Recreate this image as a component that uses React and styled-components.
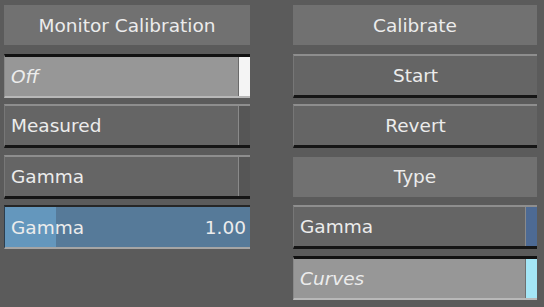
import styled, { createGlobalStyle, css } from 'styled-components';

const GlobalStyle = createGlobalStyle`
  html, body {
    margin: 0;
    padding: 0;
    background: #5b5b5b;
  }
`;

const Panel = styled.div`
  display: grid;
  grid-template-columns: 246px 244px;
  column-gap: 43px;
  padding: 3px 7px 0 4px;
  width: 544px;
  height: 307px;
  box-sizing: border-box;
  font-family: "DejaVu Sans", sans-serif;
  font-size: 18.5px;
  color: #ececec;
`;

const Column = styled.div`
  display: grid;
  grid-auto-rows: 44px;
  row-gap: 6.5px;
`;

const Title = styled.div`
  align-self: start;
  margin-top: 2px;
  height: 40px;
  display: flex;
  align-items: center;
  justify-content: center;
  background: #717171;
`;

const raised = css`
  background: #656565;
  border-top: 2px solid #8e8e8e;
  border-bottom: 3px solid #151515;
  border-left: 1px solid #777;
`;

const pressed = css`
  background: #979797;
  border-top: 3px solid #121212;
  border-bottom: 2px solid #b8b8b8;
  border-left: 1px solid #888;
`;

const Row = styled.div`
  box-sizing: border-box;
  display: flex;
  align-items: stretch;
  ${p => (p.$on ? pressed : raised)}
`;

const Label = styled.div`
  flex: 1;
  display: flex;
  align-items: center;
  justify-content: ${p => (p.$center ? 'center' : 'flex-start')};
  padding-left: ${p => (p.$center ? '0' : '6px')};
  font-style: ${p => (p.$italic ? 'italic' : 'normal')};
`;

const Indicator = styled.div`
  width: 11px;
  background: ${p => p.$color};
  border-left: 1px solid ${p => p.$edge || '#555'};
`;

const Slider = styled.div`
  box-sizing: border-box;
  position: relative;
  display: flex;
  align-items: center;
  justify-content: space-between;
  padding: 0 4px 0 6px;
  background: #567a99;
  border-top: 2px solid #262626;
  border-bottom: 2px solid #a5a5a5;
  border-left: 1px solid #2d3e4e;
`;

const SliderFill = styled.div`
  position: absolute;
  left: 0;
  top: 0;
  bottom: 0;
  background: #6497bd;
`;

const SliderText = styled.span`
  position: relative;
`;

export default function App() {
  const gamma = 1.0;
  return (
    <>
      <GlobalStyle />
      <Panel>
        <Column>
          <Title>Monitor Calibration</Title>
          <Row $on>
            <Label $italic>Off</Label>
            <Indicator $color="#f4f4f4" $edge="#6a6a6a" />
          </Row>
          <Row>
            <Label>Measured</Label>
            <Indicator $color="#565656" $edge="#8a8a8a" />
          </Row>
          <Row>
            <Label>Gamma</Label>
            <Indicator $color="#565656" $edge="#8a8a8a" />
          </Row>
          <Slider>
            <SliderFill style={{ width: `${(gamma / 4.8) * 100}%` }} />
            <SliderText>Gamma</SliderText>
            <SliderText>{gamma.toFixed(2)}</SliderText>
          </Slider>
        </Column>
        <Column>
          <Title>Calibrate</Title>
          <Row>
            <Label $center>Start</Label>
          </Row>
          <Row>
            <Label $center>Revert</Label>
          </Row>
          <Title>Type</Title>
          <Row>
            <Label>Gamma</Label>
            <Indicator $color="#4d6a94" $edge="#8a8a8a" />
          </Row>
          <Row $on>
            <Label $italic>Curves</Label>
            <Indicator $color="#a4e6f6" $edge="#707070" />
          </Row>
        </Column>
      </Panel>
    </>
  );
}
